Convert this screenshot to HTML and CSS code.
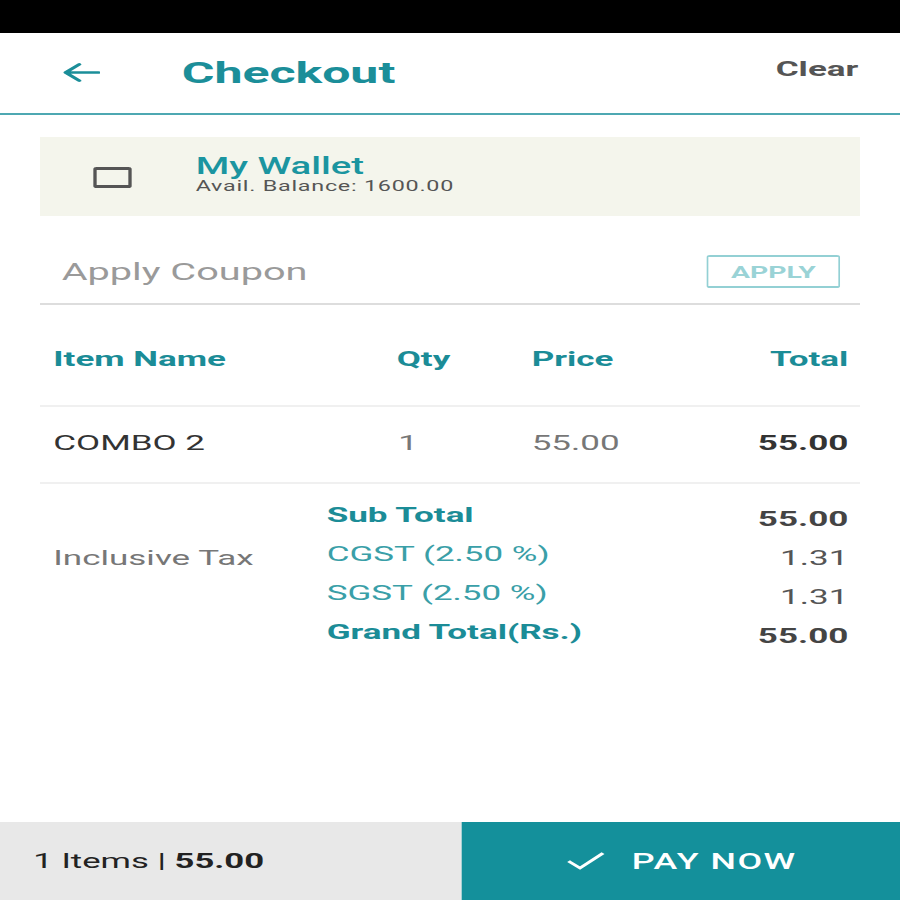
FILE: index.html
```html
<!DOCTYPE html>
<html>
<head>
<meta charset="utf-8">
<title>Checkout</title>
<link rel="stylesheet" href="styles.css">
</head>
<body>
<div class="app">
  <div class="statusbar"></div>
  <header class="topbar">
    <svg class="back" viewBox="0 0 24 21" width="23" height="21">
      <path d="M23 10.5H3 M11 2 L2.5 10.5 L11 19" fill="none" stroke="#1b8e99" stroke-width="2.6" stroke-linecap="round" stroke-linejoin="round"/>
    </svg>
    <h1 class="title">Checkout</h1>
    <span class="clear">Clear</span>
  </header>
  <main class="content">
    <section class="wallet">
      <span class="checkbox"></span>
      <div class="wallet-text">
        <div class="wallet-name">My Wallet</div>
        <div class="wallet-bal">Avail. Balance: 1600.00</div>
      </div>
    </section>
    <section class="coupon">
      <span class="coupon-input">Apply Coupon</span>
      <span class="apply-btn">APPLY</span>
    </section>
    <div class="grid head">
      <span>Item Name</span>
      <span>Qty</span>
      <span>Price</span>
      <span class="r">Total</span>
    </div>
    <div class="grid item">
      <span class="name">COMBO 2</span>
      <span class="qty">1</span>
      <span class="price">55.00</span>
      <span class="r total">55.00</span>
    </div>
    <div class="summary">
      <span class="tax">Inclusive Tax</span>
      <span class="lbl bold s1">Sub Total</span>
      <span class="val strong s1">55.00</span>
      <span class="lbl s2">CGST (2.50 %)</span>
      <span class="val s2">1.31</span>
      <span class="lbl s3">SGST (2.50 %)</span>
      <span class="val s3">1.31</span>
      <span class="lbl bold s4">Grand Total(Rs.)</span>
      <span class="val strong s4">55.00</span>
    </div>
  </main>
  <footer class="bottombar">
    <div class="count">1 Items | <b>55.00</b></div>
    <div class="pay">
      <svg class="check" viewBox="0 0 24 20" width="24" height="20">
        <path d="M3 11 L9 17 L22 3" fill="none" stroke="#ffffff" stroke-width="2.4" stroke-linecap="square"/>
      </svg>
      <span>PAY NOW</span>
    </div>
  </footer>
</div>
</body>
</html>
```
FILE: styles.css
```css
html, body {
  margin: 0;
  padding: 0;
  width: 900px;
  height: 900px;
  overflow: hidden;
  background: #ffffff;
}
.app {
  width: 540px;
  height: 900px;
  transform: scaleX(1.6667);
  transform-origin: 0 0;
  display: flex;
  flex-direction: column;
  font-family: Roboto, "Liberation Sans", Arial, sans-serif;
  color: #333;
}
.statusbar {
  height: 33px;
  background: #000;
  flex: none;
}
.topbar {
  height: 80px;
  border-bottom: 2px solid #4ea8b2;
  display: flex;
  align-items: center;
  padding: 0 25px 0 37px;
  flex: none;
}
.back {
  display: block;
  margin-top: -2px;
}
.title {
  margin: 0 0 0 49px;
  font-size: 30px;
  font-weight: 700;
  color: #1b8e99;
  line-height: 32px;
  flex: 1;
}
.clear {
  font-size: 21px;
  font-weight: 700;
  color: #555;
  margin-top: -8px;
}
.content {
  flex: 1;
  padding: 22px 24px 0;
}
.wallet {
  height: 79px;
  background: #f4f5ec;
  display: flex;
  align-items: center;
  padding-left: 32px;
}
.checkbox {
  width: 19.4px;
  height: 15px;
  border-style: solid;
  border-color: #555;
  border-width: 3px 2.3px;
  border-radius: 2px;
  flex: none;
  margin-top: 2px;
}
.wallet-text {
  margin-left: 38px;
  margin-bottom: 6px;
}
.wallet-name {
  font-size: 23px;
  line-height: 24px;
  font-weight: 500;
  color: #1b95a0;
}
.wallet-bal {
  font-size: 14px;
  line-height: 14px;
  letter-spacing: 0.45px;
  color: #555;
}
.coupon {
  display: flex;
  align-items: center;
  justify-content: space-between;
  padding: 39px 12px 15px 13px;
  border-bottom: 2px solid #dddddd;
}
.coupon-input {
  font-size: 23.8px;
  color: #9a9a9a;
}
.apply-btn {
  box-sizing: border-box;
  width: 80px;
  height: 33px;
  border: 2px solid #93d0d4;
  border-width: 2px 1.4px;
  border-radius: 2px;
  color: #9ad3d6;
  font-size: 17px;
  font-weight: 700;
  display: flex;
  align-items: center;
  justify-content: center;
}
.grid {
  display: grid;
  grid-template-columns: 206px 81px 1fr auto;
  padding: 0 7px 0 8px;
  font-size: 21px;
  line-height: 24px;
}
.r { text-align: right; }
.head {
  padding-top: 42px;
  padding-bottom: 34px;
  border-bottom: 2px solid #f0f0f0;
  font-weight: 700;
  color: #1b8c97;
}
.item {
  padding-top: 24px;
  padding-bottom: 27px;
  border-bottom: 2px solid #f0f0f0;
}
.item .name { color: #333; }
.item .qty { color: #777; padding-left: 1px; }
.item .price { color: #777; }
.item .total { color: #333; font-weight: 700; }
.summary {
  display: grid;
  grid-template-columns: 164px 1fr auto;
  grid-auto-rows: 39px;
  padding: 13px 7px 0 8px;
  font-size: 21px;
  line-height: 24px;
}
.tax {
  grid-column: 1;
  grid-row: 2;
  padding-top: 10px;
  color: #777;
}
.lbl {
  grid-column: 2;
  padding-top: 6px;
  color: #3a9fa8;
}
.lbl.bold {
  font-weight: 700;
  color: #1b8c97;
}
.val {
  grid-column: 3;
  padding-top: 10px;
  text-align: right;
  color: #555;
}
.val.strong {
  font-weight: 700;
  color: #444;
}
.s1 { grid-row: 1; }
.s2 { grid-row: 2; }
.s3 { grid-row: 3; }
.s4 { grid-row: 4; }
.bottombar {
  height: 78px;
  display: flex;
  flex: none;
}
.count {
  width: 277px;
  background: #e8e8e8;
  display: flex;
  align-items: center;
  padding-left: 20px;
  box-sizing: border-box;
  font-size: 20.8px;
  color: #222;
  white-space: pre;
}
.count b { font-weight: 700; }
.pay {
  flex: 1;
  background: #14909b;
  display: flex;
  align-items: center;
  justify-content: center;
  gap: 16px;
  color: #fff;
  font-size: 21.5px;
  font-weight: 500;
  letter-spacing: 0.9px;
}
.check { display: block; }
```
